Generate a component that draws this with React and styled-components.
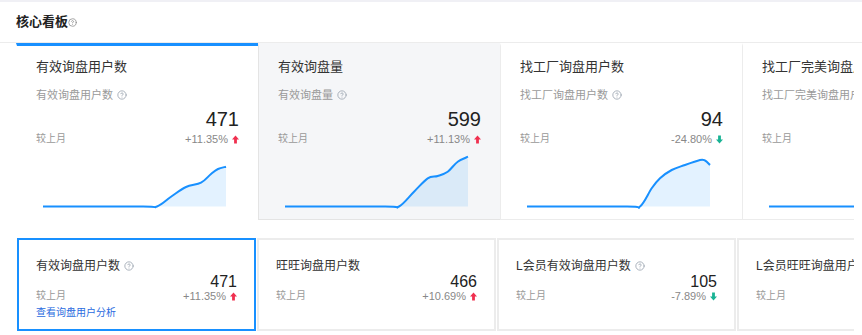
import React from "react"
import styled, { createGlobalStyle, css } from "styled-components"

const GlobalStyle = createGlobalStyle`
  html, body {
    margin: 0;
    padding: 0;
    background: #fff;
    overflow: hidden;
  }
  body {
    font-family: "Liberation Sans", "Noto Sans CJK SC", sans-serif;
  }
`

const Page = styled.div`
  width: 862px;
  height: 335px;
  overflow: hidden;
  border-top: 2px solid #f0f0f5;
  box-sizing: border-box;
`

const Header = styled.div`
  height: 40px;
  display: flex;
  align-items: center;
  padding-left: 16px;
  border-bottom: 1px solid #ececec;
`

const HeaderTitle = styled.span`
  font-size: 13px;
  font-weight: bold;
  color: #222;
  line-height: 20px;
`

const Board = styled.div`
  width: 838px;
  margin-left: 16px;
  overflow: hidden;
`

const TopRow = styled.div`
  display: flex;
`

const TopCard = styled.div`
  flex-shrink: 0;
  width: 242px;
  height: 177px;
  box-sizing: border-box;
  padding: 11px 19px 0;
  border-top: 3px solid transparent;
  border-left: 1px solid #ececec;
  border-bottom: 1px solid #ececec;
  ${(p) =>
    p.$active &&
    css`
      border-top-color: #1890ff;
      border-left-color: transparent;
      border-bottom-color: transparent;
    `}
  ${(p) =>
    p.$hover &&
    css`
      background: #f5f6f8;
      border-left-color: #e4e4e4;
      border-bottom-color: #e4e4e4;
    `}
`

const CardTitle = styled.div`
  font-size: 13px;
  line-height: 20px;
  color: #333;
  white-space: nowrap;
`

const SubTitle = styled.div`
  display: flex;
  align-items: center;
  gap: 4px;
  margin-top: 10px;
  font-size: 11px;
  line-height: 16px;
  color: #9a9a9a;
  white-space: nowrap;
`

const Stats = styled.div`
  display: flex;
  justify-content: space-between;
  align-items: flex-end;
  margin-top: ${(p) => (p.$small ? "0" : "5px")};
`

const Compare = styled.span`
  font-size: 10px;
  line-height: ${(p) => (p.$small ? "12px" : "14px")};
  color: #999;
`

const Figures = styled.div`
  display: flex;
  flex-direction: column;
  align-items: flex-end;
`

const Value = styled.div`
  font-size: ${(p) => (p.$small ? "16px" : "20px")};
  line-height: ${(p) => (p.$small ? "16px" : "22px")};
  color: #222;
  margin-bottom: ${(p) => (p.$small ? "0" : "2px")};
`

const Rate = styled.div`
  display: flex;
  align-items: center;
  gap: 4px;
  font-size: 11px;
  line-height: ${(p) => (p.$small ? "12px" : "14px")};
  color: #888;
`

const Chart = styled.svg`
  display: block;
  margin: 8px 0 0 7px;
  overflow: visible;
`

const BottomRow = styled.div`
  display: flex;
  gap: 1px;
  padding-left: 1px;
  margin-top: 18px;
`

const SmallCard = styled.div`
  flex-shrink: 0;
  width: 239px;
  height: 93px;
  box-sizing: border-box;
  padding: 18px 17px 0;
  border: 2px solid ${(p) => (p.$active ? "#1890ff" : "#ececec")};
`

const SmallTitle = styled.div`
  display: flex;
  align-items: center;
  gap: 4px;
  font-size: 12px;
  line-height: 16px;
  color: #333;
  white-space: nowrap;
`

const Link = styled.a`
  display: block;
  margin-top: 4px;
  font-size: 10px;
  line-height: 14px;
  color: #2a6be0;
  text-decoration: none;
  cursor: pointer;
`

const Help = ({ size = 10, color = "#9aa3b0" }) => (
  <svg width={size} height={size} viewBox="0 0 24 24" fill="none" stroke={color} strokeWidth="2" strokeLinecap="round" strokeLinejoin="round">
    <circle cx="12" cy="12" r="10" />
    <path d="M9.09 9a3 3 0 0 1 5.83 1c0 2-3 3-3 3" />
    <path d="M12 17h.01" />
  </svg>
)

const Arrow = ({ up }) => (
  <svg width="7" height="9" viewBox="0 0 8 9" style={up ? undefined : { transform: "rotate(180deg)" }}>
    <path d="M4 0 L8 4.6 H5.6 V9 H2.4 V4.6 H0 Z" fill={up ? "#f0304f" : "#19b394"} />
  </svg>
)

const smooth = (pts) => {
  let d = `M${pts[0][0]},${pts[0][1]}`
  for (let i = 0; i < pts.length - 1; i++) {
    const p0 = pts[i - 1] || pts[i]
    const p1 = pts[i]
    const p2 = pts[i + 1]
    const p3 = pts[i + 2] || p2
    const c1x = p1[0] + (p2[0] - p0[0]) / 6
    const c1y = p1[1] + (p2[1] - p0[1]) / 6
    const c2x = p2[0] - (p3[0] - p1[0]) / 6
    const c2y = p2[1] - (p3[1] - p1[1]) / 6
    d += ` C${c1x.toFixed(1)},${c1y.toFixed(1)} ${c2x.toFixed(1)},${c2y.toFixed(1)} ${p2[0]},${p2[1]}`
  }
  return d
}

const BASE = 52.5

const Sparkline = ({ pts }) => {
  const line = smooth(pts)
  const last = pts[pts.length - 1]
  const area = `${line} L${last[0]},${BASE} L${pts[0][0]},${BASE} Z`
  return (
    <Chart width="184" height="54" viewBox="0 0 184 54">
      <path d={area} fill="rgba(24,144,255,0.12)" />
      <path d={line} fill="none" stroke="#1890ff" strokeWidth="2" />
    </Chart>
  )
}

const topCards = [
  {
    title: "有效询盘用户数",
    value: "471",
    rate: "+11.35%",
    up: true,
    active: true,
    pts: [[0, BASE], [100, BASE], [114, BASE], [128, 42.7], [143, 33], [158, 28.7], [168, 20], [175, 15], [183, 12.7]],
  },
  {
    title: "有效询盘量",
    value: "599",
    rate: "+11.13%",
    up: true,
    hover: true,
    pts: [[0, BASE], [100, BASE], [114, BASE], [129, 37.7], [142.7, 24.3], [152.7, 22], [162.7, 17.7], [172.7, 7.7], [183, 2.7]],
  },
  {
    title: "找工厂询盘用户数",
    value: "94",
    rate: "-24.80%",
    up: false,
    pts: [[0, BASE], [100, BASE], [113, BASE], [124.7, 34.3], [133, 24.3], [144.7, 16], [158, 11], [173, 6], [178, 6.5], [183, 11]],
  },
  {
    title: "找工厂完美询盘用户数",
    value: "38",
    rate: "+5.56%",
    up: true,
    pts: [[0, BASE], [90, BASE], [183, BASE]],
  },
]

const smallCards = [
  { title: "有效询盘用户数", help: true, value: "471", rate: "+11.35%", up: true, active: true, link: "查看询盘用户分析" },
  { title: "旺旺询盘用户数", value: "466", rate: "+10.69%", up: true },
  { title: "L会员有效询盘用户数", help: true, value: "105", rate: "-7.89%", up: false },
  { title: "L会员旺旺询盘用户数", value: "98", rate: "+3.16%", up: true },
]

const App = () => {
  return (
    <Page>
      <GlobalStyle />
      <Header>
        <HeaderTitle>核心看板</HeaderTitle>
        <Help size={9} color="#888" />
      </Header>

      <Board>
        <TopRow>
          {topCards.map((c) => (
            <TopCard key={c.title} $active={c.active} $hover={c.hover}>
              <CardTitle>{c.title}</CardTitle>
              <SubTitle>
                {c.title}
                <Help />
              </SubTitle>
              <Stats>
                <Compare>较上月</Compare>
                <Figures>
                  <Value>{c.value}</Value>
                  <Rate>
                    {c.rate}
                    <Arrow up={c.up} />
                  </Rate>
                </Figures>
              </Stats>
              <Sparkline pts={c.pts} />
            </TopCard>
          ))}
        </TopRow>

        <BottomRow>
          {smallCards.map((c) => (
            <SmallCard key={c.title} $active={c.active}>
              <SmallTitle>
                {c.title}
                {c.help && <Help />}
              </SmallTitle>
              <Stats $small>
                <Compare $small>较上月</Compare>
                <Figures>
                  <Value $small>{c.value}</Value>
                  <Rate $small>
                    {c.rate}
                    <Arrow up={c.up} />
                  </Rate>
                </Figures>
              </Stats>
              {c.link && <Link>{c.link}</Link>}
            </SmallCard>
          ))}
        </BottomRow>
      </Board>
    </Page>
  )
}

export default App
